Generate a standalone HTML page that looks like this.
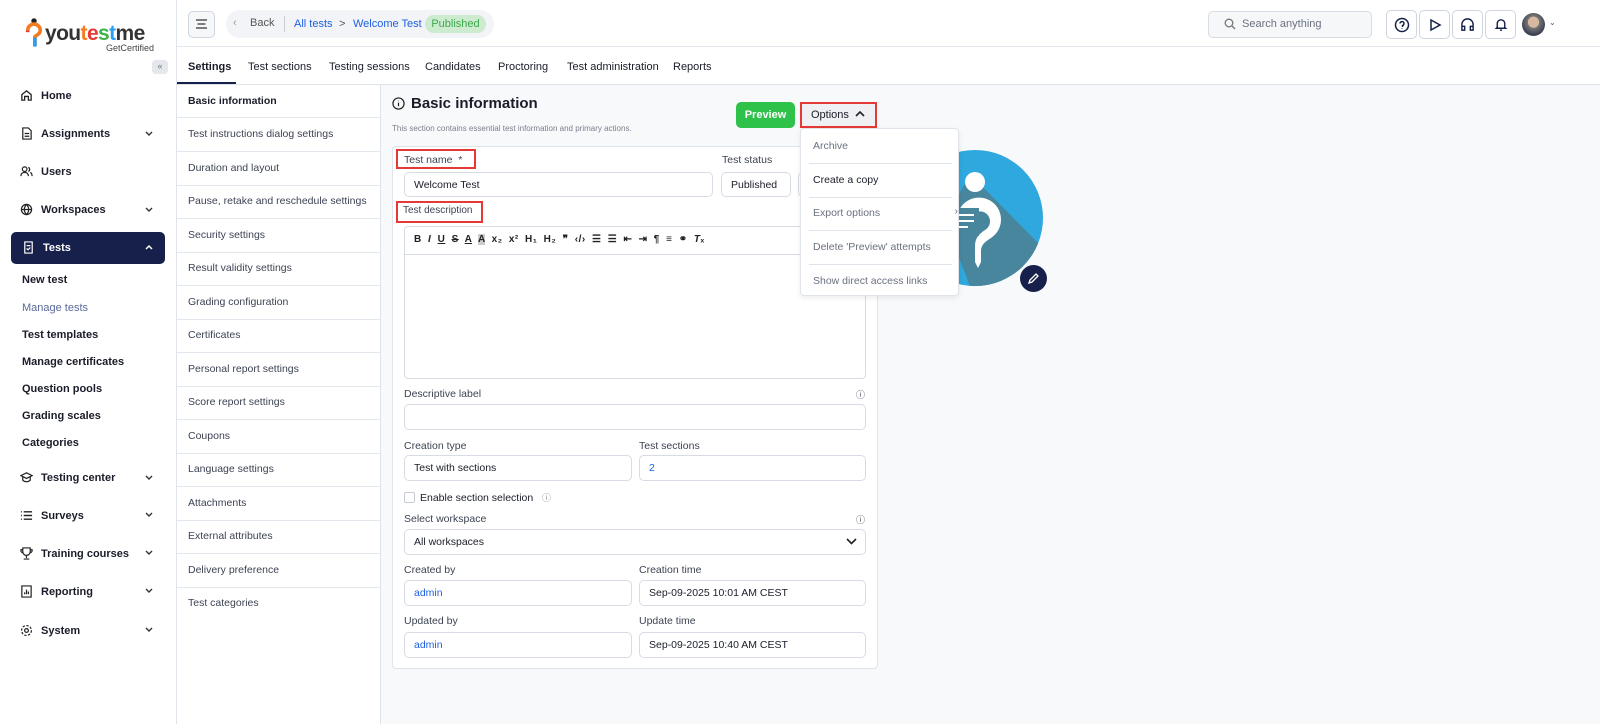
<!DOCTYPE html>
<html><head><meta charset="utf-8"><style>
*{box-sizing:border-box;margin:0;padding:0}
body{width:1600px;height:724px;overflow:hidden;font-family:"Liberation Sans",sans-serif;background:#f8f9fb;color:#1a1d29;position:relative;font-size:11px}
.a{position:absolute;white-space:nowrap}
.side{left:0;top:0;width:177px;height:724px;background:#fff;border-right:1px solid #dfe3ea}
.nav{left:20px;font-size:11px;font-weight:bold;color:#1a1d29;display:flex;align-items:center}
.nav svg{margin-right:8px}
.chev{left:144px;width:10px;height:10px}
.sub{left:22px;font-size:11px;font-weight:bold;color:#1a1d29}
.top{left:177px;top:0;width:1423px;height:47px;background:#fff;border-bottom:1px solid #e3e6ec}
.tabs{left:177px;top:47px;width:1423px;height:38px;background:#fff;border-bottom:1px solid #dfe3ea}
.tab{top:61px;font-size:11px;color:#1a1d29}
.snav{left:177px;top:85px;width:204px;height:639px;background:#fff;border-right:1px solid #dfe3ea}
.si{position:absolute;left:0;width:203px;height:34px;border-bottom:1px solid #e3e6ec;padding:10px 11px;font-size:10.5px;color:#3d4353;white-space:nowrap;overflow:hidden}
.lbl{font-size:10.5px;color:#3d4353}
.inp{background:#fff;border:1px solid #d7dce4;border-radius:5px;height:25px;font-size:10.5px;padding:6px 9px;color:#1a1d29}
.ib{width:31px;height:29px;border:1px solid #cfd5df;border-radius:5px;background:#fff;display:flex;align-items:center;justify-content:center}
.red{border:2px solid #e53935}
.mi{position:absolute;left:8px;width:143px;border-bottom:1px solid #dfe3ea;font-size:10.5px;color:#6b7180;padding:10px 4px;height:34px;white-space:nowrap}
</style></head><body>
<div class="a side"></div>
<!-- logo -->
<svg class="a" style="left:25px;top:17px" width="18" height="34" viewBox="0 0 20 36"><circle cx="10" cy="3.5" r="3" fill="#222"/><path d="M3 14a7 7 0 0 1 14 0c0 4-4 5-6 7v10" stroke="#f47b20" stroke-width="4" fill="none"/><path d="M11 22v10" stroke="#2a9df4" stroke-width="4"/><path d="M3 14v2" stroke="#e53935" stroke-width="4"/></svg>
<div class="a" style="left:45px;top:22px;font-size:21px;font-weight:bold;color:#333;letter-spacing:-0.6px">you<span style="color:#f47b20">t</span><span style="color:#e53935">e</span><span style="color:#3bb54a">s</span><span style="color:#2a9df4">t</span>me</div>
<div class="a" style="left:106px;top:43px;font-size:9px;color:#444">GetCertified</div>
<div class="a" style="left:152px;top:60px;width:16px;height:14px;background:#e4e7ec;border-radius:4px;font-size:9px;color:#777;text-align:center;line-height:13px">«</div>
<div class="a nav" style="top:89px"><svg width="13" height="13" viewBox="0 0 14 14" fill="none" stroke="#222" stroke-width="1.4"><path d="M2 6l5-4 5 4v6H9V8H5v4H2z"/></svg>Home</div>
<div class="a nav" style="top:127px"><svg width="13" height="13" viewBox="0 0 14 14" fill="none" stroke="#222" stroke-width="1.3"><path d="M3 1h6l3 3v9H3z M5 7h5M5 10h5"/></svg>Assignments</div>
<svg class="a chev" style="top:129px" viewBox="0 0 10 10"><path d="M2 3l3 3 3-3" stroke="#333" stroke-width="1.4" fill="none"/></svg>
<div class="a nav" style="top:165px"><svg width="13" height="13" viewBox="0 0 14 14" fill="none" stroke="#222" stroke-width="1.3"><circle cx="5" cy="4.5" r="2.5"/><path d="M1 12c0-3 2-4 4-4s4 1 4 4M9 2.5a2.5 2.5 0 0 1 0 4.5M11 8c1.5.5 2 2 2 4"/></svg>Users</div>
<div class="a nav" style="top:203px"><svg width="13" height="13" viewBox="0 0 14 14" fill="none" stroke="#222" stroke-width="1.3"><circle cx="7" cy="7" r="5.5"/><path d="M1.5 7h11M7 1.5c-3 3.5-3 7.5 0 11M7 1.5c3 3.5 3 7.5 0 11"/></svg>Workspaces</div>
<svg class="a chev" style="top:205px" viewBox="0 0 10 10"><path d="M2 3l3 3 3-3" stroke="#333" stroke-width="1.4" fill="none"/></svg>
<div class="a" style="left:11px;top:232px;width:154px;height:32px;background:#16204a;border-radius:5px"></div>
<div class="a nav" style="top:241px;left:22px;color:#fff"><svg width="13" height="13" viewBox="0 0 14 14" fill="none" stroke="#fff" stroke-width="1.3"><path d="M3 1h8v12H3z M5 5h4M5 8l1.5 1.5L9 7"/></svg>Tests</div>
<svg class="a chev" style="top:242px;left:144px" viewBox="0 0 10 10"><path d="M2 7l3-3 3 3" stroke="#fff" stroke-width="1.5" fill="none"/></svg>
<div class="a sub" style="top:274px">New test</div>
<div class="a sub" style="top:302px;color:#5a6b9a;font-weight:normal">Manage tests</div>
<div class="a sub" style="top:329px">Test templates</div>
<div class="a sub" style="top:356px">Manage certificates</div>
<div class="a sub" style="top:383px">Question pools</div>
<div class="a sub" style="top:410px">Grading scales</div>
<div class="a sub" style="top:437px">Categories</div>
<div class="a nav" style="top:471px"><svg width="13" height="13" viewBox="0 0 14 14" fill="none" stroke="#222" stroke-width="1.3"><path d="M1 5l6-3 6 3-6 3z M3 6v4c2 2 6 2 8 0V6"/></svg>Testing center</div>
<div class="a nav" style="top:509px"><svg width="13" height="13" viewBox="0 0 14 14" fill="none" stroke="#222" stroke-width="1.5"><path d="M1 3h1M1 7h1M1 11h1M4 3h9M4 7h9M4 11h9"/></svg>Surveys</div>
<div class="a nav" style="top:547px"><svg width="13" height="13" viewBox="0 0 14 14" fill="none" stroke="#222" stroke-width="1.3"><path d="M3 1h8v4a4 4 0 0 1-8 0z M7 9v3M4 13h6M3 3H1v1a2 2 0 0 0 2 2M11 3h2v1a2 2 0 0 1-2 2"/></svg>Training courses</div>
<div class="a nav" style="top:585px"><svg width="13" height="13" viewBox="0 0 14 14" fill="none" stroke="#222" stroke-width="1.3"><path d="M2 1h10v12H2z M5 10V8M7 10V5M9 10V7"/></svg>Reporting</div>
<div class="a nav" style="top:624px"><svg width="13" height="13" viewBox="0 0 14 14" fill="none" stroke="#222" stroke-width="1.3"><circle cx="7" cy="7" r="2"/><circle cx="7" cy="7" r="5.3" stroke-dasharray="2.5 1.6"/></svg>System</div>
<svg class="a chev" style="top:473px" viewBox="0 0 10 10"><path d="M2 3l3 3 3-3" stroke="#333" stroke-width="1.4" fill="none"/></svg>
<svg class="a chev" style="top:510px" viewBox="0 0 10 10"><path d="M2 3l3 3 3-3" stroke="#333" stroke-width="1.4" fill="none"/></svg>
<svg class="a chev" style="top:548px" viewBox="0 0 10 10"><path d="M2 3l3 3 3-3" stroke="#333" stroke-width="1.4" fill="none"/></svg>
<svg class="a chev" style="top:586px" viewBox="0 0 10 10"><path d="M2 3l3 3 3-3" stroke="#333" stroke-width="1.4" fill="none"/></svg>
<svg class="a chev" style="top:625px" viewBox="0 0 10 10"><path d="M2 3l3 3 3-3" stroke="#333" stroke-width="1.4" fill="none"/></svg>

<div class="a top"></div>
<div class="a" style="left:188px;top:11px;width:27px;height:27px;border:1px solid #cfd5df;border-radius:5px;background:#f6f7f9"></div>
<svg class="a" style="left:195px;top:18px" width="13" height="12"><path d="M1 2h11M2.5 6h8M1 10h11" stroke="#555" stroke-width="1.4"/></svg>
<div class="a" style="left:226px;top:10px;width:268px;height:28px;background:#f2f4f7;border-radius:14px"></div>
<div class="a" style="left:233px;top:17px;font-size:11px;color:#999">‹</div>
<div class="a" style="left:250px;top:17px;font-size:11px;color:#555">Back</div>
<div class="a" style="left:284px;top:16px;width:1px;height:16px;background:#ccc"></div>
<div class="a" style="left:294px;top:18px;font-size:11px;color:#1f5fe0">All tests</div>
<div class="a" style="left:339px;top:18px;font-size:11px;color:#555">&gt;</div>
<div class="a" style="left:353px;top:18px;font-size:11px;color:#1f5fe0">Welcome Test</div>
<div class="a" style="left:425px;top:15px;width:61px;height:18px;background:#cdeccf;border-radius:9px;font-size:11px;color:#3ba84b;text-align:center;line-height:18px">Published</div>
<div class="a" style="left:1208px;top:11px;width:164px;height:27px;border:1px solid #d7dce4;border-radius:5px;background:#f6f7f9"></div>
<svg class="a" style="left:1224px;top:18px" width="12" height="12" viewBox="0 0 12 12" fill="none" stroke="#777" stroke-width="1.3"><circle cx="5" cy="5" r="3.8"/><path d="M8 8l3 3"/></svg>
<div class="a" style="left:1242px;top:18px;font-size:11px;color:#6b7180">Search anything</div>
<div class="a ib" style="left:1386px;top:10px"><svg width="16" height="16" viewBox="0 0 16 16" fill="none" stroke="#16204a" stroke-width="1.5"><circle cx="8" cy="8" r="6.5"/><path d="M6 6.5a2 2 0 1 1 2.5 2V10M8 11.5v.5"/></svg></div>
<div class="a ib" style="left:1419px;top:10px"><svg width="14" height="14" viewBox="0 0 14 14" fill="none" stroke="#16204a" stroke-width="1.5"><path d="M3 2l9 5-9 5z"/></svg></div>
<div class="a ib" style="left:1452px;top:10px"><svg width="15" height="15" viewBox="0 0 16 16" fill="none" stroke="#16204a" stroke-width="1.5"><path d="M2 11V8a6 6 0 0 1 12 0v3M2 10h3v4H2zM11 10h3v4h-3z"/></svg></div>
<div class="a ib" style="left:1485px;top:10px"><svg width="14" height="15" viewBox="0 0 14 16" fill="none" stroke="#16204a" stroke-width="1.5"><path d="M3 11V7a4 4 0 0 1 8 0v4l1 1H2zM6 14h2"/></svg></div>
<div class="a" style="left:1522px;top:13px;width:23px;height:23px;border-radius:50%;background:radial-gradient(circle at 50% 40%,#d9b8a0 0 30%,#777 32%,#3b4150 70%)"></div>
<div class="a" style="left:1549px;top:18px;font-size:8px;color:#555">⌄</div>

<div class="a tabs"></div>
<div class="a tab" style="left:188px;font-weight:bold">Settings</div>
<div class="a" style="left:177px;top:82px;width:59px;height:2px;background:#16204a"></div>
<div class="a tab" style="left:248px">Test sections</div>
<div class="a tab" style="left:329px">Testing sessions</div>
<div class="a tab" style="left:425px">Candidates</div>
<div class="a tab" style="left:498px">Proctoring</div>
<div class="a tab" style="left:567px">Test administration</div>
<div class="a tab" style="left:673px">Reports</div>

<div class="a snav">
<div class="si" style="top:0;font-weight:bold;color:#1a1d29;height:33px">Basic information</div>
<div class="si" style="top:33px">Test instructions dialog settings</div>
<div class="si" style="top:67px">Duration and layout</div>
<div class="si" style="top:100px">Pause, retake and reschedule settings</div>
<div class="si" style="top:134px">Security settings</div>
<div class="si" style="top:167px">Result validity settings</div>
<div class="si" style="top:201px">Grading configuration</div>
<div class="si" style="top:234px">Certificates</div>
<div class="si" style="top:268px">Personal report settings</div>
<div class="si" style="top:301px">Score report settings</div>
<div class="si" style="top:335px">Coupons</div>
<div class="si" style="top:368px">Language settings</div>
<div class="si" style="top:402px">Attachments</div>
<div class="si" style="top:435px">External attributes</div>
<div class="si" style="top:469px">Delivery preference</div>
<div class="si" style="top:502px;border-bottom:none">Test categories</div>
</div>

<svg class="a" style="left:392px;top:97px" width="13" height="13" viewBox="0 0 14 14" fill="none" stroke="#222" stroke-width="1.3"><circle cx="7" cy="7" r="6"/><path d="M7 6v4M7 4v.5"/></svg>
<div class="a" style="left:411px;top:95px;font-size:15px;font-weight:bold">Basic information</div>
<div class="a" style="left:392px;top:124px;font-size:8px;color:#7a7f8c">This section contains essential test information and primary actions.</div>
<div class="a" style="left:736px;top:102px;width:59px;height:26px;background:#2ec24a;border-radius:5px;color:#fff;font-weight:bold;font-size:11px;text-align:center;line-height:26px">Preview</div>
<div class="a" style="left:800px;top:102px;width:77px;height:26px;background:#eef0f3;border:2px solid #e53935;font-size:11px;padding:5px 9px">Options <svg width="10" height="8" style="margin-left:3px"><path d="M1 6l4-4 4 4" stroke="#222" stroke-width="1.6" fill="none"/></svg></div>

<div class="a" style="left:392px;top:146px;width:486px;height:523px;background:#fff;border:1px solid #dfe3ea;border-radius:4px"></div>
<div class="a red" style="left:396px;top:149px;width:80px;height:20px"></div>
<div class="a lbl" style="left:404px;top:154px">Test name&nbsp; *</div>
<div class="a lbl" style="left:722px;top:154px">Test status</div>
<div class="a inp" style="left:404px;top:172px;width:309px">Welcome Test</div>
<div class="a inp" style="left:721px;top:172px;width:70px">Published</div>
<div class="a inp" style="left:798px;top:172px;width:20px"></div>
<div class="a red" style="left:396px;top:201px;width:87px;height:22px"></div>
<div class="a lbl" style="left:403px;top:205px;font-size:10px">Test description</div>
<div class="a" style="left:404px;top:226px;width:462px;height:153px;background:#fff;border:1px solid #d7dce4;border-radius:4px"></div>
<div class="a" style="left:404px;top:254px;width:462px;height:1px;background:#d7dce4"></div>
<div class="a" style="left:414px;top:234px;font-size:10px;font-weight:bold;color:#222;word-spacing:3px;letter-spacing:0.5px">B <i>I</i> <u>U</u> <s>S</s> <u>A</u> <span style="background:#ccc">A</span> x₂ x² H₁ H₂ ❞ ‹/› ☰ ☰ ⇤ ⇥ ¶ ≡ ⚭ <i>T</i>ₓ</div>

<div class="a lbl" style="left:404px;top:388px">Descriptive label</div>
<div class="a lbl" style="left:856px;top:388px;font-size:9px">ⓘ</div>
<div class="a inp" style="left:404px;top:404px;width:462px;height:26px"></div>
<div class="a lbl" style="left:404px;top:440px">Creation type</div>
<div class="a lbl" style="left:639px;top:440px">Test sections</div>
<div class="a inp" style="left:404px;top:455px;width:228px;height:26px">Test with sections</div>
<div class="a inp" style="left:639px;top:455px;width:227px;height:26px;color:#1f5fe0">2</div>
<div class="a" style="left:404px;top:492px;width:11px;height:11px;border:1px solid #c7ccd6;border-radius:2px"></div>
<div class="a lbl" style="left:420px;top:491px;color:#1a1d29">Enable section selection&nbsp;&nbsp; <span style="font-size:9px;color:#888">ⓘ</span></div>
<div class="a lbl" style="left:404px;top:513px">Select workspace</div>
<div class="a lbl" style="left:856px;top:513px;font-size:9px">ⓘ</div>
<div class="a inp" style="left:404px;top:529px;width:462px;height:26px">All workspaces</div>
<svg class="a" style="left:846px;top:537px" width="11" height="9"><path d="M1 2l4.5 4.5L10 2" stroke="#222" stroke-width="1.6" fill="none"/></svg>
<div class="a lbl" style="left:404px;top:564px">Created by</div>
<div class="a lbl" style="left:639px;top:564px">Creation time</div>
<div class="a inp" style="left:404px;top:580px;width:228px;height:26px;color:#1f5fe0">admin</div>
<div class="a inp" style="left:639px;top:580px;width:227px;height:26px">Sep-09-2025 10:01 AM CEST</div>
<div class="a lbl" style="left:404px;top:615px">Updated by</div>
<div class="a lbl" style="left:639px;top:615px">Update time</div>
<div class="a inp" style="left:404px;top:632px;width:228px;height:26px;color:#1f5fe0">admin</div>
<div class="a inp" style="left:639px;top:632px;width:227px;height:26px">Sep-09-2025 10:40 AM CEST</div>

<!-- avatar -->
<svg class="a" style="left:905px;top:150px" width="142" height="142" viewBox="0 0 142 142">
<defs><clipPath id="c"><circle cx="70" cy="68" r="68"/></clipPath></defs>
<circle cx="70" cy="68" r="68" fill="#2ea8de"/>
<path d="M65 24L140 100L110 140L70 150L40 70z" fill="#48869e" clip-path="url(#c)"/>
<circle cx="70" cy="32" r="10" fill="#fff"/>
<path d="M52 70a22 22 0 1 1 34 18c-8 5-10 8-10 14v10l-3 6-3-6V96c0-8 4-12 10-16a10 10 0 1 0-15-8z" fill="#fff"/>
<rect x="48" y="58" width="26" height="28" fill="#48869e"/>
<path d="M53 65h16M53 71h16M53 77h10" stroke="#fff" stroke-width="2"/>
</svg>
<div class="a" style="left:1020px;top:265px;width:27px;height:27px;border-radius:50%;background:#16204a"></div>
<svg class="a" style="left:1027px;top:272px" width="13" height="13" viewBox="0 0 13 13" fill="none" stroke="#fff" stroke-width="1.3"><path d="M2 11l1-3 6-6 2 2-6 6z"/></svg>

<!-- dropdown -->
<div class="a" style="left:800px;top:128px;width:159px;height:168px;background:#fff;border:1px solid #dfe3ea;border-radius:4px;box-shadow:0 2px 6px rgba(0,0,0,.08)">
<div class="mi" style="top:1px">Archive</div>
<div class="mi" style="top:35px;color:#1a1d29">Create a copy</div>
<div class="mi" style="top:68px">Export options<span style="position:absolute;right:-6px;top:8px">›</span></div>
<div class="mi" style="top:102px">Delete 'Preview' attempts</div>
<div class="mi" style="top:136px;border-bottom:none">Show direct access links</div>
</div>
</body></html>
